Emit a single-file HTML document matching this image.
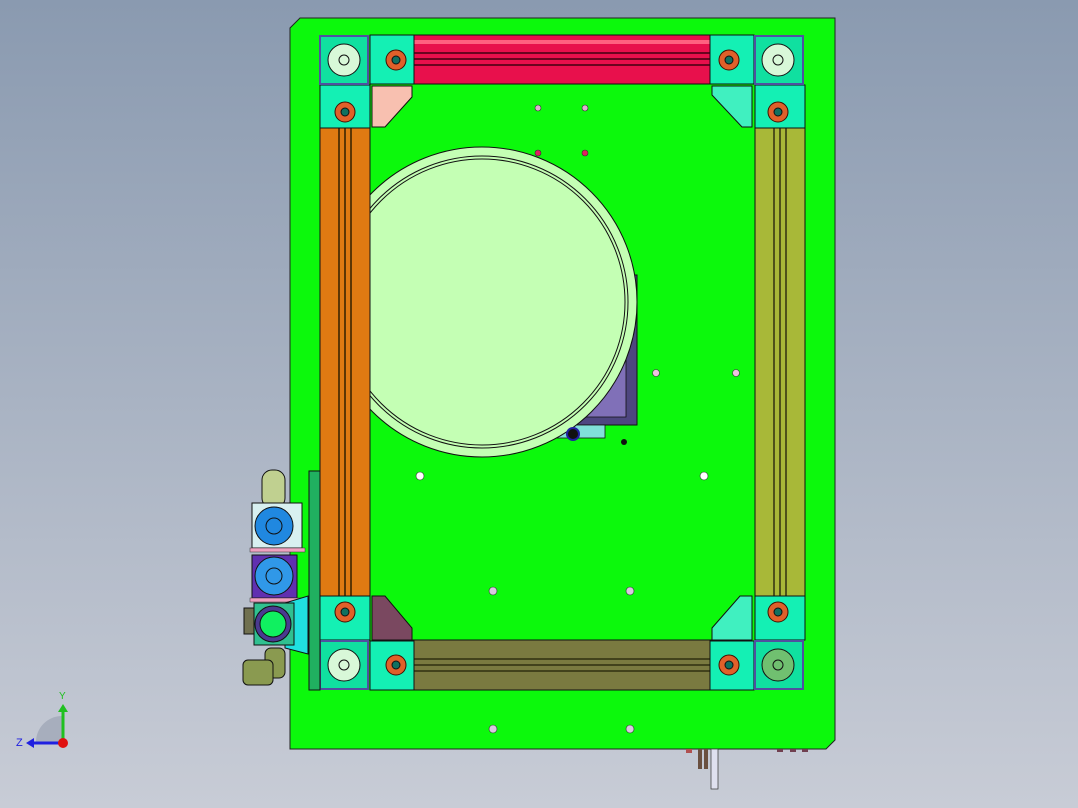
<!DOCTYPE html>
<html><head><style>
html,body{margin:0;padding:0}
body{width:1078px;height:808px;overflow:hidden;background:linear-gradient(#8a9ab0,#c8ccd6);font-family:"Liberation Sans",sans-serif}
svg{display:block}
</style></head><body>
<svg width="1078" height="808" viewBox="0 0 1078 808">
<!-- plate -->
<polygon points="300,18 835,18 835,740 826,749 290,749 290,28" fill="#0cf90c" stroke="#222" stroke-width="1"/>
<!-- rods below -->
<rect x="711" y="749" width="7" height="40" fill="#dfe0ef" stroke="#333" stroke-width="0.7"/>
<rect x="698" y="749" width="4" height="20" fill="#6a5040"/><rect x="704" y="749" width="4" height="20" fill="#6a5040"/>
<rect x="686" y="749" width="6" height="4" fill="#b05050"/>
<rect x="777" y="749" width="6" height="3" fill="#704050"/><rect x="790" y="749" width="6" height="3" fill="#704050"/><rect x="802" y="749" width="6" height="3" fill="#704050"/>

<!-- purple box behind circle -->
<rect x="570" y="275" width="67" height="150" fill="#4e4680" stroke="#111"/>
<polygon points="570,300 626,300 626,417 560,417" fill="#8070b8" stroke="#111" stroke-width="0.8"/>
<rect x="557" y="425" width="48" height="13" fill="#80e0d8" stroke="#111" stroke-width="0.8"/>
<!-- big circle -->
<circle cx="482" cy="302" r="155" fill="#c4ffb4" stroke="#111" stroke-width="1"/>
<circle cx="482" cy="302" r="146" fill="none" stroke="#111" stroke-width="1"/>
<circle cx="482" cy="302" r="143" fill="none" stroke="#111" stroke-width="1"/>
<circle cx="573" cy="434" r="6" fill="#111" stroke="#2020a0" stroke-width="2"/>
<circle cx="624" cy="442" r="3" fill="#111"/>

<!-- holes -->
<g stroke="#333" stroke-width="0.6">
<circle cx="420" cy="476" r="4" fill="#fff"/><circle cx="704" cy="476" r="4" fill="#fff"/>
<circle cx="538" cy="108" r="3" fill="#e0b0d0"/><circle cx="585" cy="108" r="3" fill="#e0b0d0"/>
<circle cx="538" cy="153" r="3" fill="#e02060"/><circle cx="585" cy="153" r="3" fill="#e02060"/>
<circle cx="656" cy="373" r="3.5" fill="#f0c0e0"/><circle cx="736" cy="373" r="3.5" fill="#f0c0e0"/>
<circle cx="493" cy="591" r="4" fill="#d8c8e0"/><circle cx="630" cy="591" r="4" fill="#d8c8e0"/>
<circle cx="493" cy="729" r="4" fill="#d8c8e0"/><circle cx="630" cy="729" r="4" fill="#d8c8e0"/>
</g>

<!-- top red rail -->
<rect x="400" y="35" width="330" height="49" fill="#e8104c" stroke="#111"/>
<g stroke="#400010" stroke-width="1.5"><line x1="400" y1="53" x2="730" y2="53"/><line x1="400" y1="59" x2="730" y2="59"/><line x1="400" y1="65" x2="730" y2="65"/></g>
<rect x="400" y="40" width="330" height="4" fill="#ff6080"/>
<!-- bottom olive rail -->
<rect x="400" y="640" width="330" height="50" fill="#7a7a40" stroke="#111"/>
<g stroke="#303010" stroke-width="1.5"><line x1="400" y1="659" x2="730" y2="659"/><line x1="400" y1="665" x2="730" y2="665"/><line x1="400" y1="671" x2="730" y2="671"/></g>
<!-- left orange rail -->
<rect x="320" y="120" width="50" height="490" fill="#df7a12" stroke="#111"/>
<g stroke="#302000" stroke-width="1.5"><line x1="339" y1="120" x2="339" y2="610"/><line x1="345" y1="120" x2="345" y2="610"/><line x1="351" y1="120" x2="351" y2="610"/></g>
<!-- right olive rail -->
<rect x="755" y="120" width="50" height="490" fill="#a8b838" stroke="#111"/>
<g stroke="#303010" stroke-width="1.5"><line x1="774" y1="120" x2="774" y2="610"/><line x1="780" y1="120" x2="780" y2="610"/><line x1="786" y1="120" x2="786" y2="610"/></g>

<!-- brackets -->
<polygon points="372,86 412,86 412,97 385,127 372,127" fill="#f8c0b0" stroke="#111"/>
<polygon points="752,86 712,86 712,95 742,127 752,127" fill="#40f0c0" stroke="#111"/>
<polygon points="372,596 385,596 412,628 412,640 372,640" fill="#7a4860" stroke="#111"/>
<polygon points="752,596 740,596 712,628 712,640 752,640" fill="#40f0c0" stroke="#111"/>

<!-- corner blocks -->
<g fill="#14f0b4" stroke="#111" stroke-width="1">
<rect x="370" y="35" width="44" height="49"/><rect x="710" y="35" width="44" height="49"/>
<rect x="320" y="85" width="50" height="43"/><rect x="755" y="85" width="50" height="43"/>
<rect x="320" y="596" width="50" height="44"/><rect x="755" y="596" width="50" height="44"/>
<rect x="370" y="641" width="44" height="49"/><rect x="710" y="641" width="44" height="49"/>
</g>
<g fill="#e0602a" stroke="#401000" stroke-width="1">
<circle cx="396" cy="60" r="10"/><circle cx="729" cy="60" r="10"/>
<circle cx="345" cy="112" r="10"/><circle cx="778" cy="112" r="10"/>
<circle cx="345" cy="612" r="10"/><circle cx="778" cy="612" r="10"/>
<circle cx="396" cy="665" r="10"/><circle cx="729" cy="665" r="10"/>
</g>
<g fill="#107060" stroke="#111">
<circle cx="396" cy="60" r="4"/><circle cx="729" cy="60" r="4"/>
<circle cx="345" cy="112" r="4"/><circle cx="778" cy="112" r="4"/>
<circle cx="345" cy="612" r="4"/><circle cx="778" cy="612" r="4"/>
<circle cx="396" cy="665" r="4"/><circle cx="729" cy="665" r="4"/>
</g>

<!-- corner wheels -->
<g stroke="#5050a0" stroke-width="2" fill="#10e0a0">
<rect x="320" y="36" width="48" height="48"/><rect x="755" y="36" width="48" height="48"/>
<rect x="320" y="641" width="48" height="48"/><rect x="755" y="641" width="48" height="48"/>
</g>
<g stroke="#111" stroke-width="1">
<circle cx="344" cy="60" r="16" fill="#d8f8d8"/><circle cx="778" cy="60" r="16" fill="#d8f8d8"/>
<circle cx="344" cy="665" r="16" fill="#d8f8d8"/><circle cx="778" cy="665" r="16" fill="#70c070"/>
<circle cx="344" cy="60" r="5" fill="none"/><circle cx="778" cy="60" r="5" fill="none"/>
<circle cx="344" cy="665" r="5" fill="none"/><circle cx="778" cy="665" r="5" fill="none"/>
</g>

<!-- left strip & components -->
<rect x="309" y="471" width="11" height="219" fill="#20b060" stroke="#111"/>
<rect x="262" y="470" width="23" height="38" rx="10" fill="#c0d090" stroke="#111"/>
<rect x="252" y="503" width="50" height="45" fill="#d8f0f0" stroke="#111"/>
<circle cx="274" cy="526" r="19" fill="#2088e0" stroke="#111"/><circle cx="274" cy="526" r="8" fill="none" stroke="#111"/>
<rect x="250" y="548" width="55" height="4" fill="#f0a0c0" stroke="#333" stroke-width="0.5"/>
<rect x="252" y="555" width="45" height="43" fill="#6030b0" stroke="#111"/>
<circle cx="274" cy="576" r="19" fill="#3098e8" stroke="#111"/><circle cx="274" cy="576" r="8" fill="none" stroke="#111"/>
<rect x="250" y="598" width="55" height="4" fill="#f0a0c0" stroke="#333" stroke-width="0.5"/>
<polygon points="285,603 308,596 308,654 285,648" fill="#20e0e0" stroke="#111"/>
<rect x="254" y="603" width="40" height="42" fill="#30c090" stroke="#111"/>
<circle cx="273" cy="624" r="18" fill="#4a3a90" stroke="#111"/><circle cx="273" cy="624" r="13" fill="#10f060" stroke="#111"/>
<rect x="244" y="608" width="10" height="26" fill="#707050" stroke="#111"/>
<rect x="265" y="648" width="20" height="30" rx="6" fill="#8a9a50" stroke="#111"/>
<rect x="243" y="660" width="30" height="25" rx="5" fill="#8a9a50" stroke="#111"/>

<!-- axis triad -->
<path d="M36 742 A26 26 0 0 1 62 716 L62 742Z" fill="#a0a8b8" opacity="0.8"/>
<line x1="63" y1="742" x2="63" y2="710" stroke="#20c020" stroke-width="3"/>
<polygon points="58,712 68,712 63,704" fill="#20c020"/>
<line x1="63" y1="743" x2="32" y2="743" stroke="#2020e0" stroke-width="3"/>
<polygon points="34,738 34,748 26,743" fill="#2020e0"/>
<circle cx="63" cy="743" r="5" fill="#e01010"/>
<text x="59" y="699" font-size="10" fill="#20c020">Y</text>
<text x="16" y="746" font-size="11" fill="#2020e0">Z</text>
</svg>
</body></html>
